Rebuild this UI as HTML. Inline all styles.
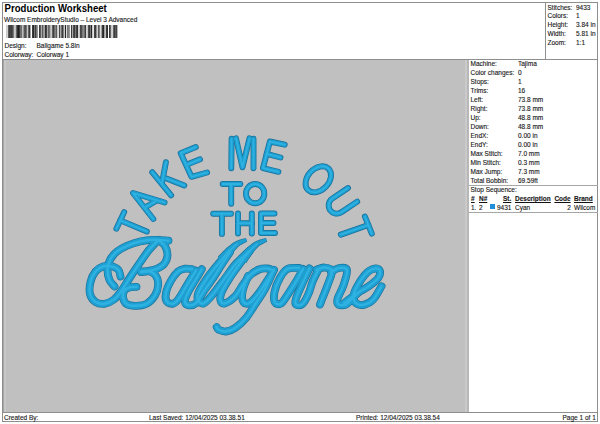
<!DOCTYPE html>
<html><head><meta charset="utf-8">
<style>
html,body{margin:0;padding:0;background:#fff;width:600px;height:424px;overflow:hidden;}
body{position:relative;font-family:"Liberation Sans",sans-serif;color:#1a1a1a;}
.a{position:absolute;white-space:pre;line-height:1;}
.t{font-size:6.5px;-webkit-text-stroke:0.12px #111;}
.ln{position:absolute;background:#8e8e8e;}
</style></head><body>
<!-- outer border -->
<div class="ln" style="left:2px;top:2px;width:596px;height:1px"></div>
<div class="ln" style="left:2px;top:421px;width:596px;height:1px"></div>
<div class="ln" style="left:2px;top:2px;width:1px;height:420px"></div>
<div class="ln" style="left:597px;top:2px;width:1px;height:420px"></div>
<!-- header line -->
<div class="ln" style="left:2px;top:59px;width:596px;height:1px"></div>
<!-- header right box -->
<div class="ln" style="left:545px;top:2px;width:1px;height:58px"></div>
<!-- gray area -->
<div style="position:absolute;left:3px;top:60px;width:464px;height:352px;background:#c0c0c0"></div>
<div style="position:absolute;left:3px;top:60px;width:1px;height:352px;background:#a4a4a4"></div>
<div style="position:absolute;left:4px;top:60px;width:2px;height:352px;background:#c8c8c8"></div>
<div style="position:absolute;left:465px;top:60px;width:2px;height:352px;background:#cacaca"></div>
<div class="ln" style="left:467px;top:60px;width:2px;height:352px;background:#b8b8b8"></div>
<svg style="position:absolute;left:0;top:0" width="600" height="424" viewBox="0 0 600 424"><g fill="none" stroke="#176f99" stroke-width="5.9" stroke-linecap="round" stroke-linejoin="round"><path d="M116.4,228.7 L124.2,212.1"/><path d="M120.3,220.4 L146.8,231.5"/><path d="M153.3,219.0 L133.0,193.0 L164.6,202.5"/><path d="M146.2,206.7 L155.2,201.5"/><path d="M152.2,172.2 L171.1,195.3"/><path d="M165.9,162.2 L162.0,183.0"/><path d="M166.5,178.5 L184.3,185.4"/><path d="M195.8,147.1 L180.7,153.2 L191.5,176.8 L207.1,172.5"/><path d="M188.2,164.1 L200.0,159.3"/><path d="M231.6,138.8 L231.3,168.3"/><path d="M236.0,138.3 L242.5,167.3 L249.5,138.3"/><path d="M253.5,138.8 L253.5,168.3"/><path d="M284.7,144.7 L269.9,141.5 L263.0,168.1 L278.4,171.8"/><path d="M266.7,153.8 L280.5,157.5"/><path d="M348.0,188.0 L332.2,198.6 L330.6,200.0 L329.5,201.8 L328.8,203.9 L328.7,206.0 L329.1,208.1 L330.0,210.0 L331.5,211.6 L333.2,212.8 L335.3,213.5 L337.4,213.6 L339.5,213.2 L341.4,212.2 L357.2,201.6"/><path d="M364.9,216.5 L371.8,233.6"/><path d="M368.3,225.0 L340.8,234.6"/><path d="M222.7,184.0 L240.3,184.0"/><path d="M231.2,184.0 L231.2,203.7"/><path d="M213.2,213.7 L231.0,213.7"/><path d="M221.9,213.7 L221.9,233.9"/><path d="M238.0,213.5 L238.0,233.5"/><path d="M251.8,213.5 L251.8,233.5"/><path d="M238.0,223.3 L251.8,223.3"/><path d="M274.5,213.5 L261.0,213.5 L261.0,233.0 L275.0,233.0"/><path d="M261.0,223.0 L273.5,223.0"/><ellipse cx="318.3" cy="179.3" rx="10.6" ry="14.8" transform="rotate(43 318.3 179.3)"/><ellipse cx="255.15" cy="193.65" rx="9.15" ry="9.65" transform="rotate(0 255.15 193.65)"/></g><g fill="none" stroke="#176f99" stroke-width="7.8" stroke-linecap="round" stroke-linejoin="round"><path d="M120.5,276.5 C120.2,275.4 120.0,271.7 118.5,270.0 C117.0,268.3 114.1,266.9 111.5,266.3 C108.9,265.7 105.7,265.6 103.0,266.5 C100.3,267.4 97.6,268.9 95.5,271.5 C93.4,274.1 91.4,278.2 90.5,282.0 C89.6,285.8 89.2,290.7 90.0,294.0 C90.8,297.3 93.1,300.4 95.5,302.0 C97.9,303.6 101.4,304.2 104.5,303.8 C107.6,303.4 111.2,301.6 114.0,299.5 C116.8,297.4 118.5,294.9 121.0,291.5 C123.5,288.1 126.0,283.6 129.0,279.0 C132.0,274.4 135.7,268.8 139.0,264.0 C142.3,259.2 145.8,254.0 149.0,250.0 C152.2,246.0 156.8,241.7 158.3,240.0"/><path d="M114.5,286.5 C113.7,285.4 110.7,282.9 109.5,280.0 C108.3,277.1 107.3,272.5 107.5,269.0 C107.7,265.5 108.9,261.9 110.5,259.0 C112.1,256.1 114.2,253.7 117.0,251.5 C119.8,249.3 123.2,247.5 127.0,245.8 C130.8,244.1 135.5,242.5 140.0,241.5 C144.5,240.5 149.2,240.0 154.0,239.8 C158.8,239.7 166.1,240.5 168.5,240.6"/><path d="M159.0,240.5 C160.0,241.4 163.6,243.6 165.0,246.0 C166.4,248.4 167.6,252.1 167.5,255.0 C167.4,257.9 166.2,261.2 164.5,263.5 C162.8,265.8 160.2,267.2 157.5,268.5 C154.8,269.8 150.7,270.5 148.0,271.0 C145.3,271.5 142.6,271.4 141.5,271.5"/><path d="M141.0,272.0 C142.5,271.9 147.5,270.8 150.0,271.5 C152.5,272.2 154.6,273.8 156.0,276.0 C157.4,278.2 158.4,281.8 158.2,285.0 C158.0,288.2 156.9,292.3 155.0,295.4 C153.1,298.5 150.1,301.9 147.0,303.6 C143.9,305.3 139.6,305.7 136.2,305.8 C132.8,305.9 128.7,305.5 126.5,304.0 C124.3,302.5 123.3,299.3 123.0,297.0 C122.7,294.7 123.5,291.6 124.8,290.0 C126.0,288.4 128.6,287.7 130.5,287.2 C132.4,286.7 135.5,286.9 136.5,286.8"/><path d="M192.0,269.2 C190.8,269.1 187.4,268.3 185.1,268.7 C182.8,269.1 180.3,269.6 178.0,271.5 C175.7,273.5 173.0,277.1 171.0,280.6 C169.0,284.2 166.7,289.2 166.0,292.7 C165.3,296.2 165.6,299.8 166.8,301.6 C168.0,303.4 171.4,304.0 173.3,303.6 C175.2,303.1 176.2,302.1 178.5,299.0 C180.8,295.9 184.1,289.7 187.0,285.0 C189.9,280.2 194.5,273.0 196.0,270.6"/><path d="M201.8,269.2 C200.7,271.1 197.1,277.1 195.0,280.6 C192.9,284.2 190.7,287.2 189.0,290.5 C187.3,293.8 185.2,298.0 185.0,300.4 C184.8,302.8 185.7,304.5 187.5,305.0 C189.3,305.5 192.9,305.7 195.7,303.4 C198.4,301.1 201.0,295.3 204.0,291.0 C207.0,286.7 210.5,282.0 213.5,277.5 C216.5,273.0 219.2,268.4 222.0,264.2 C224.8,259.9 228.7,254.0 230.0,252.0"/><path d="M229.0,251.0 C227.2,253.2 221.7,259.6 218.0,264.2 C214.3,268.8 210.2,273.6 207.0,278.3 C203.8,283.0 200.0,288.9 198.5,292.5 C197.0,296.1 197.2,298.2 198.0,300.0 C198.8,301.8 201.2,304.2 203.5,303.5 C205.8,302.8 207.9,300.2 211.5,296.0 C215.1,291.8 221.0,283.6 225.0,278.3 C229.0,273.0 231.6,268.6 235.5,264.2 C239.4,259.8 246.3,254.0 248.5,252.0"/><path d="M249.5,251.0 C247.8,253.2 242.8,259.6 239.5,264.2 C236.2,268.8 232.5,273.6 229.5,278.3 C226.5,283.0 223.0,288.8 221.5,292.5 C220.0,296.2 220.0,298.7 220.5,300.5 C221.0,302.3 222.1,304.2 224.5,303.5 C226.9,302.8 231.9,299.7 235.0,296.5 C238.1,293.3 240.4,288.1 243.0,284.5 C245.6,280.9 247.8,277.5 250.5,275.0 C253.2,272.5 256.2,270.6 259.0,269.5 C261.8,268.4 265.1,268.3 267.5,268.5 C269.9,268.7 272.5,270.2 273.5,270.5"/><path d="M248.0,276.0 C247.1,278.6 243.2,287.5 242.5,291.9 C241.8,296.3 242.2,300.4 243.5,302.2 C244.8,304.0 247.4,304.3 250.0,302.7 C252.6,301.1 255.0,298.3 259.0,292.9 C263.0,287.4 271.5,273.7 274.0,269.8"/><path d="M273.5,270.5 C272.0,273.8 267.4,284.6 264.5,290.0 C261.6,295.4 259.0,298.4 256.0,303.0 C253.0,307.6 249.9,313.3 246.5,317.4 C243.1,321.5 238.9,325.4 235.5,327.8 C232.1,330.2 228.8,331.2 226.0,331.5 C223.2,331.8 220.1,330.4 218.5,329.7 C216.9,328.9 217.0,327.4 216.7,327.0"/><path d="M299.0,268.0 C297.1,268.1 290.7,267.3 287.5,268.9 C284.3,270.6 282.2,274.0 280.0,277.8 C277.8,281.7 275.3,287.8 274.5,291.9 C273.7,296.0 273.9,300.6 275.0,302.5 C276.1,304.5 279.0,304.7 281.0,303.6 C283.0,302.4 284.5,299.3 287.0,295.7 C289.5,292.0 293.3,286.0 296.0,281.6 C298.7,277.1 301.8,271.0 303.0,268.9"/><path d="M309.5,268.4 C308.2,271.1 304.2,279.4 302.0,284.4 C299.8,289.4 297.0,295.1 296.0,298.5 C295.0,301.9 294.9,303.7 296.0,304.6 C297.1,305.5 300.4,305.9 302.5,304.1 C304.6,302.3 306.8,297.7 308.5,293.8 C310.2,289.9 311.3,284.7 313.0,280.6 C314.7,276.6 317.6,271.3 318.5,269.4"/><path d="M316.5,269.8 C317.8,269.5 321.4,267.3 324.0,267.5 C326.6,267.7 331.4,267.8 332.0,270.8 C332.6,273.8 329.2,280.6 327.5,285.3 C325.8,290.1 323.2,296.2 322.0,299.4 C320.8,302.6 320.3,303.7 320.0,304.6"/><path d="M331.0,272.2 C332.3,271.5 336.3,268.4 339.0,268.0 C341.7,267.6 346.2,267.0 347.0,269.8 C347.8,272.7 345.1,280.5 343.5,285.3 C341.9,290.2 338.3,295.7 337.5,299.0 C336.7,302.2 337.1,303.7 338.5,304.6 C339.9,305.5 343.8,305.5 346.0,304.6 C348.2,303.7 350.0,300.9 352.0,299.0 C354.0,297.0 357.0,293.7 358.0,292.7"/><path d="M344.0,303.2 C346.3,301.4 354.0,295.4 358.0,292.7 C362.0,289.9 364.7,289.1 368.0,286.8 C371.3,284.4 376.0,280.9 378.0,278.3 C380.0,275.7 380.3,272.9 380.0,271.3 C379.7,269.6 378.1,268.3 376.0,268.4 C373.9,268.6 370.4,269.6 367.5,272.2 C364.6,274.8 360.8,280.1 358.5,283.9 C356.2,287.8 353.9,292.1 353.5,295.3 C353.1,298.5 354.2,301.7 356.0,303.3 C357.8,304.8 361.6,305.3 364.5,304.6 C367.4,303.9 370.7,302.3 373.5,299.2 C376.3,296.2 380.2,288.4 381.5,286.3"/></g><g fill="#176f99" stroke="none"><path d="M226.17,263.35 L226.61,262.58 L227.21,261.58 L227.93,260.44 L228.73,259.20 L229.58,257.92 L230.45,256.65 L231.29,255.44 L232.09,254.34 L232.90,253.26 L233.73,252.17 L234.56,251.10 L235.38,250.07 L236.20,249.09 L237.03,248.17 L237.86,247.31 L238.67,246.55 L239.59,245.83 L240.69,245.11 L241.91,244.40 L243.17,243.73 L244.40,243.10 L245.53,242.53 L246.50,242.01 L247.21,241.56 L245.79,238.04 L245.02,238.20 L243.99,238.43 L242.74,238.74 L241.33,239.13 L239.83,239.59 L238.30,240.13 L236.77,240.75 L235.33,241.45 L233.99,242.23 L232.72,243.07 L231.49,243.96 L230.31,244.89 L229.16,245.84 L228.06,246.78 L226.98,247.72 L225.91,248.66 L224.77,249.70 L223.58,250.86 L222.41,252.06 L221.27,253.23 L220.21,254.34 L219.26,255.31 L218.46,256.10 L217.83,256.65Z"/><path d="M246.17,263.35 L246.61,262.58 L247.21,261.58 L247.93,260.44 L248.73,259.20 L249.58,257.92 L250.45,256.65 L251.29,255.44 L252.09,254.34 L252.90,253.26 L253.73,252.17 L254.56,251.10 L255.38,250.07 L256.20,249.09 L257.03,248.17 L257.86,247.31 L258.67,246.55 L259.59,245.83 L260.69,245.11 L261.91,244.40 L263.17,243.73 L264.40,243.10 L265.53,242.53 L266.50,242.01 L267.21,241.56 L265.79,238.04 L265.02,238.20 L263.99,238.43 L262.74,238.74 L261.33,239.13 L259.83,239.59 L258.30,240.13 L256.77,240.75 L255.33,241.45 L253.99,242.23 L252.72,243.07 L251.49,243.96 L250.31,244.89 L249.16,245.84 L248.06,246.78 L246.98,247.72 L245.91,248.66 L244.77,249.70 L243.58,250.86 L242.41,252.06 L241.27,253.23 L240.21,254.34 L239.26,255.31 L238.46,256.10 L237.83,256.65Z"/></g><g fill="none" stroke="#1f9ed0" stroke-width="4.5" stroke-linecap="round" stroke-linejoin="round"><path d="M116.4,228.7 L124.2,212.1"/><path d="M120.3,220.4 L146.8,231.5"/><path d="M153.3,219.0 L133.0,193.0 L164.6,202.5"/><path d="M146.2,206.7 L155.2,201.5"/><path d="M152.2,172.2 L171.1,195.3"/><path d="M165.9,162.2 L162.0,183.0"/><path d="M166.5,178.5 L184.3,185.4"/><path d="M195.8,147.1 L180.7,153.2 L191.5,176.8 L207.1,172.5"/><path d="M188.2,164.1 L200.0,159.3"/><path d="M231.6,138.8 L231.3,168.3"/><path d="M236.0,138.3 L242.5,167.3 L249.5,138.3"/><path d="M253.5,138.8 L253.5,168.3"/><path d="M284.7,144.7 L269.9,141.5 L263.0,168.1 L278.4,171.8"/><path d="M266.7,153.8 L280.5,157.5"/><path d="M348.0,188.0 L332.2,198.6 L330.6,200.0 L329.5,201.8 L328.8,203.9 L328.7,206.0 L329.1,208.1 L330.0,210.0 L331.5,211.6 L333.2,212.8 L335.3,213.5 L337.4,213.6 L339.5,213.2 L341.4,212.2 L357.2,201.6"/><path d="M364.9,216.5 L371.8,233.6"/><path d="M368.3,225.0 L340.8,234.6"/><path d="M222.7,184.0 L240.3,184.0"/><path d="M231.2,184.0 L231.2,203.7"/><path d="M213.2,213.7 L231.0,213.7"/><path d="M221.9,213.7 L221.9,233.9"/><path d="M238.0,213.5 L238.0,233.5"/><path d="M251.8,213.5 L251.8,233.5"/><path d="M238.0,223.3 L251.8,223.3"/><path d="M274.5,213.5 L261.0,213.5 L261.0,233.0 L275.0,233.0"/><path d="M261.0,223.0 L273.5,223.0"/><ellipse cx="318.3" cy="179.3" rx="10.6" ry="14.8" transform="rotate(43 318.3 179.3)"/><ellipse cx="255.15" cy="193.65" rx="9.15" ry="9.65" transform="rotate(0 255.15 193.65)"/></g><g fill="none" stroke="#1f9ed0" stroke-width="6.6" stroke-linecap="round" stroke-linejoin="round"><path d="M120.5,276.5 C120.2,275.4 120.0,271.7 118.5,270.0 C117.0,268.3 114.1,266.9 111.5,266.3 C108.9,265.7 105.7,265.6 103.0,266.5 C100.3,267.4 97.6,268.9 95.5,271.5 C93.4,274.1 91.4,278.2 90.5,282.0 C89.6,285.8 89.2,290.7 90.0,294.0 C90.8,297.3 93.1,300.4 95.5,302.0 C97.9,303.6 101.4,304.2 104.5,303.8 C107.6,303.4 111.2,301.6 114.0,299.5 C116.8,297.4 118.5,294.9 121.0,291.5 C123.5,288.1 126.0,283.6 129.0,279.0 C132.0,274.4 135.7,268.8 139.0,264.0 C142.3,259.2 145.8,254.0 149.0,250.0 C152.2,246.0 156.8,241.7 158.3,240.0"/><path d="M114.5,286.5 C113.7,285.4 110.7,282.9 109.5,280.0 C108.3,277.1 107.3,272.5 107.5,269.0 C107.7,265.5 108.9,261.9 110.5,259.0 C112.1,256.1 114.2,253.7 117.0,251.5 C119.8,249.3 123.2,247.5 127.0,245.8 C130.8,244.1 135.5,242.5 140.0,241.5 C144.5,240.5 149.2,240.0 154.0,239.8 C158.8,239.7 166.1,240.5 168.5,240.6"/><path d="M159.0,240.5 C160.0,241.4 163.6,243.6 165.0,246.0 C166.4,248.4 167.6,252.1 167.5,255.0 C167.4,257.9 166.2,261.2 164.5,263.5 C162.8,265.8 160.2,267.2 157.5,268.5 C154.8,269.8 150.7,270.5 148.0,271.0 C145.3,271.5 142.6,271.4 141.5,271.5"/><path d="M141.0,272.0 C142.5,271.9 147.5,270.8 150.0,271.5 C152.5,272.2 154.6,273.8 156.0,276.0 C157.4,278.2 158.4,281.8 158.2,285.0 C158.0,288.2 156.9,292.3 155.0,295.4 C153.1,298.5 150.1,301.9 147.0,303.6 C143.9,305.3 139.6,305.7 136.2,305.8 C132.8,305.9 128.7,305.5 126.5,304.0 C124.3,302.5 123.3,299.3 123.0,297.0 C122.7,294.7 123.5,291.6 124.8,290.0 C126.0,288.4 128.6,287.7 130.5,287.2 C132.4,286.7 135.5,286.9 136.5,286.8"/><path d="M192.0,269.2 C190.8,269.1 187.4,268.3 185.1,268.7 C182.8,269.1 180.3,269.6 178.0,271.5 C175.7,273.5 173.0,277.1 171.0,280.6 C169.0,284.2 166.7,289.2 166.0,292.7 C165.3,296.2 165.6,299.8 166.8,301.6 C168.0,303.4 171.4,304.0 173.3,303.6 C175.2,303.1 176.2,302.1 178.5,299.0 C180.8,295.9 184.1,289.7 187.0,285.0 C189.9,280.2 194.5,273.0 196.0,270.6"/><path d="M201.8,269.2 C200.7,271.1 197.1,277.1 195.0,280.6 C192.9,284.2 190.7,287.2 189.0,290.5 C187.3,293.8 185.2,298.0 185.0,300.4 C184.8,302.8 185.7,304.5 187.5,305.0 C189.3,305.5 192.9,305.7 195.7,303.4 C198.4,301.1 201.0,295.3 204.0,291.0 C207.0,286.7 210.5,282.0 213.5,277.5 C216.5,273.0 219.2,268.4 222.0,264.2 C224.8,259.9 228.7,254.0 230.0,252.0"/><path d="M229.0,251.0 C227.2,253.2 221.7,259.6 218.0,264.2 C214.3,268.8 210.2,273.6 207.0,278.3 C203.8,283.0 200.0,288.9 198.5,292.5 C197.0,296.1 197.2,298.2 198.0,300.0 C198.8,301.8 201.2,304.2 203.5,303.5 C205.8,302.8 207.9,300.2 211.5,296.0 C215.1,291.8 221.0,283.6 225.0,278.3 C229.0,273.0 231.6,268.6 235.5,264.2 C239.4,259.8 246.3,254.0 248.5,252.0"/><path d="M249.5,251.0 C247.8,253.2 242.8,259.6 239.5,264.2 C236.2,268.8 232.5,273.6 229.5,278.3 C226.5,283.0 223.0,288.8 221.5,292.5 C220.0,296.2 220.0,298.7 220.5,300.5 C221.0,302.3 222.1,304.2 224.5,303.5 C226.9,302.8 231.9,299.7 235.0,296.5 C238.1,293.3 240.4,288.1 243.0,284.5 C245.6,280.9 247.8,277.5 250.5,275.0 C253.2,272.5 256.2,270.6 259.0,269.5 C261.8,268.4 265.1,268.3 267.5,268.5 C269.9,268.7 272.5,270.2 273.5,270.5"/><path d="M248.0,276.0 C247.1,278.6 243.2,287.5 242.5,291.9 C241.8,296.3 242.2,300.4 243.5,302.2 C244.8,304.0 247.4,304.3 250.0,302.7 C252.6,301.1 255.0,298.3 259.0,292.9 C263.0,287.4 271.5,273.7 274.0,269.8"/><path d="M273.5,270.5 C272.0,273.8 267.4,284.6 264.5,290.0 C261.6,295.4 259.0,298.4 256.0,303.0 C253.0,307.6 249.9,313.3 246.5,317.4 C243.1,321.5 238.9,325.4 235.5,327.8 C232.1,330.2 228.8,331.2 226.0,331.5 C223.2,331.8 220.1,330.4 218.5,329.7 C216.9,328.9 217.0,327.4 216.7,327.0"/><path d="M299.0,268.0 C297.1,268.1 290.7,267.3 287.5,268.9 C284.3,270.6 282.2,274.0 280.0,277.8 C277.8,281.7 275.3,287.8 274.5,291.9 C273.7,296.0 273.9,300.6 275.0,302.5 C276.1,304.5 279.0,304.7 281.0,303.6 C283.0,302.4 284.5,299.3 287.0,295.7 C289.5,292.0 293.3,286.0 296.0,281.6 C298.7,277.1 301.8,271.0 303.0,268.9"/><path d="M309.5,268.4 C308.2,271.1 304.2,279.4 302.0,284.4 C299.8,289.4 297.0,295.1 296.0,298.5 C295.0,301.9 294.9,303.7 296.0,304.6 C297.1,305.5 300.4,305.9 302.5,304.1 C304.6,302.3 306.8,297.7 308.5,293.8 C310.2,289.9 311.3,284.7 313.0,280.6 C314.7,276.6 317.6,271.3 318.5,269.4"/><path d="M316.5,269.8 C317.8,269.5 321.4,267.3 324.0,267.5 C326.6,267.7 331.4,267.8 332.0,270.8 C332.6,273.8 329.2,280.6 327.5,285.3 C325.8,290.1 323.2,296.2 322.0,299.4 C320.8,302.6 320.3,303.7 320.0,304.6"/><path d="M331.0,272.2 C332.3,271.5 336.3,268.4 339.0,268.0 C341.7,267.6 346.2,267.0 347.0,269.8 C347.8,272.7 345.1,280.5 343.5,285.3 C341.9,290.2 338.3,295.7 337.5,299.0 C336.7,302.2 337.1,303.7 338.5,304.6 C339.9,305.5 343.8,305.5 346.0,304.6 C348.2,303.7 350.0,300.9 352.0,299.0 C354.0,297.0 357.0,293.7 358.0,292.7"/><path d="M344.0,303.2 C346.3,301.4 354.0,295.4 358.0,292.7 C362.0,289.9 364.7,289.1 368.0,286.8 C371.3,284.4 376.0,280.9 378.0,278.3 C380.0,275.7 380.3,272.9 380.0,271.3 C379.7,269.6 378.1,268.3 376.0,268.4 C373.9,268.6 370.4,269.6 367.5,272.2 C364.6,274.8 360.8,280.1 358.5,283.9 C356.2,287.8 353.9,292.1 353.5,295.3 C353.1,298.5 354.2,301.7 356.0,303.3 C357.8,304.8 361.6,305.3 364.5,304.6 C367.4,303.9 370.7,302.3 373.5,299.2 C376.3,296.2 380.2,288.4 381.5,286.3"/></g><g fill="#1f9ed0" stroke="none"><path d="M225.70,262.98 L226.14,262.21 L226.74,261.21 L227.45,260.07 L228.26,258.83 L229.11,257.54 L229.99,256.26 L230.84,255.05 L231.65,253.94 L232.46,252.85 L233.30,251.76 L234.13,250.68 L234.96,249.64 L235.80,248.65 L236.64,247.71 L237.49,246.84 L238.35,246.05 L239.30,245.31 L240.43,244.57 L241.67,243.85 L242.94,243.17 L244.18,242.54 L245.32,241.96 L246.28,241.45 L246.99,241.00 L246.01,238.60 L245.23,238.76 L244.20,238.99 L242.95,239.30 L241.56,239.69 L240.07,240.14 L238.56,240.67 L237.06,241.27 L235.65,241.95 L234.35,242.71 L233.10,243.53 L231.90,244.40 L230.73,245.32 L229.59,246.26 L228.49,247.20 L227.42,248.13 L226.35,249.06 L225.22,250.10 L224.04,251.25 L222.87,252.44 L221.74,253.61 L220.68,254.71 L219.73,255.69 L218.93,256.47 L218.30,257.02Z"/><path d="M245.70,262.98 L246.14,262.21 L246.74,261.21 L247.45,260.07 L248.26,258.83 L249.11,257.54 L249.99,256.26 L250.84,255.05 L251.65,253.94 L252.46,252.85 L253.30,251.76 L254.13,250.68 L254.96,249.64 L255.80,248.65 L256.64,247.71 L257.49,246.84 L258.35,246.05 L259.30,245.31 L260.43,244.57 L261.67,243.85 L262.94,243.17 L264.18,242.54 L265.32,241.96 L266.28,241.45 L266.99,241.00 L266.01,238.60 L265.23,238.76 L264.20,238.99 L262.95,239.30 L261.56,239.69 L260.07,240.14 L258.56,240.67 L257.06,241.27 L255.65,241.95 L254.35,242.71 L253.10,243.53 L251.90,244.40 L250.73,245.32 L249.59,246.26 L248.49,247.20 L247.42,248.13 L246.35,249.06 L245.22,250.10 L244.04,251.25 L242.87,252.44 L241.74,253.61 L240.68,254.71 L239.73,255.69 L238.93,256.47 L238.30,257.02Z"/></g><g fill="none" stroke="#2eb2e2" stroke-width="1.8" stroke-linecap="round" stroke-linejoin="round"><path d="M116.4,228.7 L124.2,212.1"/><path d="M120.3,220.4 L146.8,231.5"/><path d="M153.3,219.0 L133.0,193.0 L164.6,202.5"/><path d="M146.2,206.7 L155.2,201.5"/><path d="M152.2,172.2 L171.1,195.3"/><path d="M165.9,162.2 L162.0,183.0"/><path d="M166.5,178.5 L184.3,185.4"/><path d="M195.8,147.1 L180.7,153.2 L191.5,176.8 L207.1,172.5"/><path d="M188.2,164.1 L200.0,159.3"/><path d="M231.6,138.8 L231.3,168.3"/><path d="M236.0,138.3 L242.5,167.3 L249.5,138.3"/><path d="M253.5,138.8 L253.5,168.3"/><path d="M284.7,144.7 L269.9,141.5 L263.0,168.1 L278.4,171.8"/><path d="M266.7,153.8 L280.5,157.5"/><path d="M348.0,188.0 L332.2,198.6 L330.6,200.0 L329.5,201.8 L328.8,203.9 L328.7,206.0 L329.1,208.1 L330.0,210.0 L331.5,211.6 L333.2,212.8 L335.3,213.5 L337.4,213.6 L339.5,213.2 L341.4,212.2 L357.2,201.6"/><path d="M364.9,216.5 L371.8,233.6"/><path d="M368.3,225.0 L340.8,234.6"/><path d="M222.7,184.0 L240.3,184.0"/><path d="M231.2,184.0 L231.2,203.7"/><path d="M213.2,213.7 L231.0,213.7"/><path d="M221.9,213.7 L221.9,233.9"/><path d="M238.0,213.5 L238.0,233.5"/><path d="M251.8,213.5 L251.8,233.5"/><path d="M238.0,223.3 L251.8,223.3"/><path d="M274.5,213.5 L261.0,213.5 L261.0,233.0 L275.0,233.0"/><path d="M261.0,223.0 L273.5,223.0"/><ellipse cx="318.3" cy="179.3" rx="10.6" ry="14.8" transform="rotate(43 318.3 179.3)"/><ellipse cx="255.15" cy="193.65" rx="9.15" ry="9.65" transform="rotate(0 255.15 193.65)"/></g><g fill="none" stroke="#2eb2e2" stroke-width="2.4" stroke-linecap="round" stroke-linejoin="round"><path d="M120.5,276.5 C120.2,275.4 120.0,271.7 118.5,270.0 C117.0,268.3 114.1,266.9 111.5,266.3 C108.9,265.7 105.7,265.6 103.0,266.5 C100.3,267.4 97.6,268.9 95.5,271.5 C93.4,274.1 91.4,278.2 90.5,282.0 C89.6,285.8 89.2,290.7 90.0,294.0 C90.8,297.3 93.1,300.4 95.5,302.0 C97.9,303.6 101.4,304.2 104.5,303.8 C107.6,303.4 111.2,301.6 114.0,299.5 C116.8,297.4 118.5,294.9 121.0,291.5 C123.5,288.1 126.0,283.6 129.0,279.0 C132.0,274.4 135.7,268.8 139.0,264.0 C142.3,259.2 145.8,254.0 149.0,250.0 C152.2,246.0 156.8,241.7 158.3,240.0"/><path d="M114.5,286.5 C113.7,285.4 110.7,282.9 109.5,280.0 C108.3,277.1 107.3,272.5 107.5,269.0 C107.7,265.5 108.9,261.9 110.5,259.0 C112.1,256.1 114.2,253.7 117.0,251.5 C119.8,249.3 123.2,247.5 127.0,245.8 C130.8,244.1 135.5,242.5 140.0,241.5 C144.5,240.5 149.2,240.0 154.0,239.8 C158.8,239.7 166.1,240.5 168.5,240.6"/><path d="M159.0,240.5 C160.0,241.4 163.6,243.6 165.0,246.0 C166.4,248.4 167.6,252.1 167.5,255.0 C167.4,257.9 166.2,261.2 164.5,263.5 C162.8,265.8 160.2,267.2 157.5,268.5 C154.8,269.8 150.7,270.5 148.0,271.0 C145.3,271.5 142.6,271.4 141.5,271.5"/><path d="M141.0,272.0 C142.5,271.9 147.5,270.8 150.0,271.5 C152.5,272.2 154.6,273.8 156.0,276.0 C157.4,278.2 158.4,281.8 158.2,285.0 C158.0,288.2 156.9,292.3 155.0,295.4 C153.1,298.5 150.1,301.9 147.0,303.6 C143.9,305.3 139.6,305.7 136.2,305.8 C132.8,305.9 128.7,305.5 126.5,304.0 C124.3,302.5 123.3,299.3 123.0,297.0 C122.7,294.7 123.5,291.6 124.8,290.0 C126.0,288.4 128.6,287.7 130.5,287.2 C132.4,286.7 135.5,286.9 136.5,286.8"/><path d="M192.0,269.2 C190.8,269.1 187.4,268.3 185.1,268.7 C182.8,269.1 180.3,269.6 178.0,271.5 C175.7,273.5 173.0,277.1 171.0,280.6 C169.0,284.2 166.7,289.2 166.0,292.7 C165.3,296.2 165.6,299.8 166.8,301.6 C168.0,303.4 171.4,304.0 173.3,303.6 C175.2,303.1 176.2,302.1 178.5,299.0 C180.8,295.9 184.1,289.7 187.0,285.0 C189.9,280.2 194.5,273.0 196.0,270.6"/><path d="M201.8,269.2 C200.7,271.1 197.1,277.1 195.0,280.6 C192.9,284.2 190.7,287.2 189.0,290.5 C187.3,293.8 185.2,298.0 185.0,300.4 C184.8,302.8 185.7,304.5 187.5,305.0 C189.3,305.5 192.9,305.7 195.7,303.4 C198.4,301.1 201.0,295.3 204.0,291.0 C207.0,286.7 210.5,282.0 213.5,277.5 C216.5,273.0 219.2,268.4 222.0,264.2 C224.8,259.9 228.7,254.0 230.0,252.0"/><path d="M229.0,251.0 C227.2,253.2 221.7,259.6 218.0,264.2 C214.3,268.8 210.2,273.6 207.0,278.3 C203.8,283.0 200.0,288.9 198.5,292.5 C197.0,296.1 197.2,298.2 198.0,300.0 C198.8,301.8 201.2,304.2 203.5,303.5 C205.8,302.8 207.9,300.2 211.5,296.0 C215.1,291.8 221.0,283.6 225.0,278.3 C229.0,273.0 231.6,268.6 235.5,264.2 C239.4,259.8 246.3,254.0 248.5,252.0"/><path d="M249.5,251.0 C247.8,253.2 242.8,259.6 239.5,264.2 C236.2,268.8 232.5,273.6 229.5,278.3 C226.5,283.0 223.0,288.8 221.5,292.5 C220.0,296.2 220.0,298.7 220.5,300.5 C221.0,302.3 222.1,304.2 224.5,303.5 C226.9,302.8 231.9,299.7 235.0,296.5 C238.1,293.3 240.4,288.1 243.0,284.5 C245.6,280.9 247.8,277.5 250.5,275.0 C253.2,272.5 256.2,270.6 259.0,269.5 C261.8,268.4 265.1,268.3 267.5,268.5 C269.9,268.7 272.5,270.2 273.5,270.5"/><path d="M248.0,276.0 C247.1,278.6 243.2,287.5 242.5,291.9 C241.8,296.3 242.2,300.4 243.5,302.2 C244.8,304.0 247.4,304.3 250.0,302.7 C252.6,301.1 255.0,298.3 259.0,292.9 C263.0,287.4 271.5,273.7 274.0,269.8"/><path d="M273.5,270.5 C272.0,273.8 267.4,284.6 264.5,290.0 C261.6,295.4 259.0,298.4 256.0,303.0 C253.0,307.6 249.9,313.3 246.5,317.4 C243.1,321.5 238.9,325.4 235.5,327.8 C232.1,330.2 228.8,331.2 226.0,331.5 C223.2,331.8 220.1,330.4 218.5,329.7 C216.9,328.9 217.0,327.4 216.7,327.0"/><path d="M299.0,268.0 C297.1,268.1 290.7,267.3 287.5,268.9 C284.3,270.6 282.2,274.0 280.0,277.8 C277.8,281.7 275.3,287.8 274.5,291.9 C273.7,296.0 273.9,300.6 275.0,302.5 C276.1,304.5 279.0,304.7 281.0,303.6 C283.0,302.4 284.5,299.3 287.0,295.7 C289.5,292.0 293.3,286.0 296.0,281.6 C298.7,277.1 301.8,271.0 303.0,268.9"/><path d="M309.5,268.4 C308.2,271.1 304.2,279.4 302.0,284.4 C299.8,289.4 297.0,295.1 296.0,298.5 C295.0,301.9 294.9,303.7 296.0,304.6 C297.1,305.5 300.4,305.9 302.5,304.1 C304.6,302.3 306.8,297.7 308.5,293.8 C310.2,289.9 311.3,284.7 313.0,280.6 C314.7,276.6 317.6,271.3 318.5,269.4"/><path d="M316.5,269.8 C317.8,269.5 321.4,267.3 324.0,267.5 C326.6,267.7 331.4,267.8 332.0,270.8 C332.6,273.8 329.2,280.6 327.5,285.3 C325.8,290.1 323.2,296.2 322.0,299.4 C320.8,302.6 320.3,303.7 320.0,304.6"/><path d="M331.0,272.2 C332.3,271.5 336.3,268.4 339.0,268.0 C341.7,267.6 346.2,267.0 347.0,269.8 C347.8,272.7 345.1,280.5 343.5,285.3 C341.9,290.2 338.3,295.7 337.5,299.0 C336.7,302.2 337.1,303.7 338.5,304.6 C339.9,305.5 343.8,305.5 346.0,304.6 C348.2,303.7 350.0,300.9 352.0,299.0 C354.0,297.0 357.0,293.7 358.0,292.7"/><path d="M344.0,303.2 C346.3,301.4 354.0,295.4 358.0,292.7 C362.0,289.9 364.7,289.1 368.0,286.8 C371.3,284.4 376.0,280.9 378.0,278.3 C380.0,275.7 380.3,272.9 380.0,271.3 C379.7,269.6 378.1,268.3 376.0,268.4 C373.9,268.6 370.4,269.6 367.5,272.2 C364.6,274.8 360.8,280.1 358.5,283.9 C356.2,287.8 353.9,292.1 353.5,295.3 C353.1,298.5 354.2,301.7 356.0,303.3 C357.8,304.8 361.6,305.3 364.5,304.6 C367.4,303.9 370.7,302.3 373.5,299.2 C376.3,296.2 380.2,288.4 381.5,286.3"/></g><g fill="none" stroke="#2eb2e2" stroke-width="1.68" stroke-linecap="round"><path d="M222.0,260.0 C223.2,258.6 226.5,254.2 229.0,251.5 C231.5,248.8 235.7,245.2 237.0,244.0"/><path d="M242.0,260.0 C243.2,258.6 246.5,254.2 249.0,251.5 C251.5,248.8 255.7,245.2 257.0,244.0"/></g></svg>
<!-- footer line -->
<div class="ln" style="left:2px;top:412px;width:596px;height:1px"></div>

<svg style="position:absolute;left:0;top:0" width="600" height="60"><g><rect x="6" y="25" width="1" height="13" fill="rgb(200,200,200)"/><rect x="7" y="25" width="1" height="13" fill="rgb(210,210,210)"/><rect x="8" y="25" width="1" height="13" fill="rgb(90,90,90)"/><rect x="9" y="25" width="1" height="13" fill="rgb(60,60,60)"/><rect x="10" y="25" width="1" height="13" fill="rgb(70,70,70)"/><rect x="11" y="25" width="1" height="13" fill="rgb(60,60,60)"/><rect x="12" y="25" width="1" height="13" fill="rgb(80,80,80)"/><rect x="13" y="25" width="1" height="13" fill="rgb(120,120,120)"/><rect x="14" y="25" width="1" height="13" fill="rgb(200,200,200)"/><rect x="15" y="25" width="1" height="13" fill="rgb(190,190,190)"/><rect x="16" y="25" width="1" height="13" fill="rgb(100,100,100)"/><rect x="17" y="25" width="1" height="13" fill="rgb(50,50,50)"/><rect x="18" y="25" width="1" height="13" fill="rgb(30,30,30)"/><rect x="19" y="25" width="1" height="13" fill="rgb(60,60,60)"/><rect x="20" y="25" width="1" height="13" fill="rgb(110,110,110)"/><rect x="21" y="25" width="1" height="13" fill="rgb(110,110,110)"/><rect x="22" y="25" width="1" height="13" fill="rgb(190,190,190)"/><rect x="23" y="25" width="1" height="13" fill="rgb(150,150,150)"/><rect x="24" y="25" width="1" height="13" fill="rgb(90,90,90)"/><rect x="25" y="25" width="1" height="13" fill="rgb(80,80,80)"/><rect x="26" y="25" width="1" height="13" fill="rgb(120,120,120)"/><rect x="27" y="25" width="1" height="13" fill="rgb(200,200,200)"/><rect x="28" y="25" width="1" height="13" fill="rgb(100,100,100)"/><rect x="29" y="25" width="1" height="13" fill="rgb(60,60,60)"/><rect x="30" y="25" width="1" height="13" fill="rgb(170,170,170)"/><rect x="32" y="25" width="1" height="13" fill="rgb(60,60,60)"/><rect x="33" y="25" width="1" height="13" fill="rgb(40,40,40)"/><rect x="34" y="25" width="1" height="13" fill="rgb(120,120,120)"/><rect x="35" y="25" width="1" height="13" fill="rgb(60,60,60)"/><rect x="36" y="25" width="1" height="13" fill="rgb(120,120,120)"/><rect x="37" y="25" width="1" height="13" fill="rgb(150,150,150)"/><rect x="39" y="25" width="1" height="13" fill="rgb(60,60,60)"/><rect x="40" y="25" width="1" height="13" fill="rgb(90,90,90)"/><rect x="41" y="25" width="1" height="13" fill="rgb(170,170,170)"/><rect x="42" y="25" width="1" height="13" fill="rgb(90,90,90)"/><rect x="43" y="25" width="1" height="13" fill="rgb(150,150,150)"/><rect x="44" y="25" width="1" height="13" fill="rgb(160,160,160)"/><rect x="45" y="25" width="1" height="13" fill="rgb(50,50,50)"/><rect x="46" y="25" width="1" height="13" fill="rgb(70,70,70)"/><rect x="47" y="25" width="1" height="13" fill="rgb(170,170,170)"/><rect x="48" y="25" width="1" height="13" fill="rgb(100,100,100)"/><rect x="49" y="25" width="1" height="13" fill="rgb(120,120,120)"/><rect x="50" y="25" width="1" height="13" fill="rgb(180,180,180)"/><rect x="51" y="25" width="1" height="13" fill="rgb(200,200,200)"/><rect x="52" y="25" width="1" height="13" fill="rgb(100,100,100)"/><rect x="53" y="25" width="1" height="13" fill="rgb(60,60,60)"/><rect x="54" y="25" width="1" height="13" fill="rgb(110,110,110)"/><rect x="55" y="25" width="1" height="13" fill="rgb(130,130,130)"/><rect x="56" y="25" width="1" height="13" fill="rgb(90,90,90)"/><rect x="57" y="25" width="1" height="13" fill="rgb(200,200,200)"/><rect x="58" y="25" width="1" height="13" fill="rgb(220,220,220)"/><rect x="59" y="25" width="1" height="13" fill="rgb(70,70,70)"/><rect x="60" y="25" width="1" height="13" fill="rgb(170,170,170)"/><rect x="61" y="25" width="1" height="13" fill="rgb(110,110,110)"/><rect x="62" y="25" width="1" height="13" fill="rgb(60,60,60)"/><rect x="63" y="25" width="1" height="13" fill="rgb(130,130,130)"/><rect x="64" y="25" width="1" height="13" fill="rgb(200,200,200)"/><rect x="65" y="25" width="1" height="13" fill="rgb(40,40,40)"/><rect x="66" y="25" width="1" height="13" fill="rgb(220,220,220)"/><rect x="67" y="25" width="1" height="13" fill="rgb(120,120,120)"/><rect x="68" y="25" width="1" height="13" fill="rgb(130,130,130)"/><rect x="69" y="25" width="1" height="13" fill="rgb(150,150,150)"/><rect x="70" y="25" width="1" height="13" fill="rgb(240,240,240)"/><rect x="71" y="25" width="1" height="13" fill="rgb(60,60,60)"/><rect x="72" y="25" width="1" height="13" fill="rgb(170,170,170)"/><rect x="73" y="25" width="1" height="13" fill="rgb(80,80,80)"/><rect x="74" y="25" width="1" height="13" fill="rgb(60,60,60)"/><rect x="75" y="25" width="1" height="13" fill="rgb(120,120,120)"/><rect x="76" y="25" width="1" height="13" fill="rgb(70,70,70)"/><rect x="77" y="25" width="1" height="13" fill="rgb(50,50,50)"/><rect x="78" y="25" width="1" height="13" fill="rgb(210,210,210)"/><rect x="79" y="25" width="1" height="13" fill="rgb(200,200,200)"/><rect x="80" y="25" width="1" height="13" fill="rgb(70,70,70)"/><rect x="81" y="25" width="1" height="13" fill="rgb(80,80,80)"/><rect x="82" y="25" width="1" height="13" fill="rgb(120,120,120)"/><rect x="83" y="25" width="1" height="13" fill="rgb(140,140,140)"/><rect x="84" y="25" width="1" height="13" fill="rgb(110,110,110)"/><rect x="85" y="25" width="1" height="13" fill="rgb(60,60,60)"/><rect x="86" y="25" width="1" height="13" fill="rgb(210,210,210)"/><rect x="87" y="25" width="1" height="13" fill="rgb(200,200,200)"/><rect x="88" y="25" width="1" height="13" fill="rgb(80,80,80)"/><rect x="89" y="25" width="1" height="13" fill="rgb(60,60,60)"/><rect x="90" y="25" width="1" height="13" fill="rgb(120,120,120)"/><rect x="91" y="25" width="1" height="13" fill="rgb(40,40,40)"/><rect x="92" y="25" width="1" height="13" fill="rgb(200,200,200)"/><rect x="93" y="25" width="1" height="13" fill="rgb(230,230,230)"/><rect x="94" y="25" width="1" height="13" fill="rgb(70,70,70)"/><rect x="95" y="25" width="1" height="13" fill="rgb(60,60,60)"/><rect x="96" y="25" width="1" height="13" fill="rgb(150,150,150)"/><rect x="97" y="25" width="1" height="13" fill="rgb(210,210,210)"/><rect x="98" y="25" width="1" height="13" fill="rgb(90,90,90)"/><rect x="99" y="25" width="1" height="13" fill="rgb(130,130,130)"/><rect x="100" y="25" width="1" height="13" fill="rgb(220,220,220)"/><rect x="101" y="25" width="1" height="13" fill="rgb(160,160,160)"/><rect x="102" y="25" width="1" height="13" fill="rgb(60,60,60)"/><rect x="103" y="25" width="1" height="13" fill="rgb(40,40,40)"/><rect x="104" y="25" width="1" height="13" fill="rgb(160,160,160)"/><rect x="105" y="25" width="1" height="13" fill="rgb(190,190,190)"/><rect x="106" y="25" width="1" height="13" fill="rgb(60,60,60)"/><rect x="107" y="25" width="1" height="13" fill="rgb(50,50,50)"/><rect x="109" y="25" width="1" height="13" fill="rgb(60,60,60)"/><rect x="110" y="25" width="1" height="13" fill="rgb(100,100,100)"/><rect x="111" y="25" width="1" height="13" fill="rgb(200,200,200)"/><rect x="112" y="25" width="1" height="13" fill="rgb(210,210,210)"/><rect x="113" y="25" width="1" height="13" fill="rgb(100,100,100)"/><rect x="114" y="25" width="1" height="13" fill="rgb(60,60,60)"/><rect x="115" y="25" width="1" height="13" fill="rgb(90,90,90)"/><rect x="116" y="25" width="1" height="13" fill="rgb(70,70,70)"/><rect x="117" y="25" width="1" height="13" fill="rgb(180,180,180)"/></g></svg>
<!-- header text -->
<div class="a" style="left:4.6px;top:3px;font-size:9.6px;font-weight:bold;color:#000;transform:scaleY(1.13);transform-origin:0 0">Production Worksheet</div>
<div class="a t" style="left:4px;top:17px">Wilcom EmbroideryStudio – Level 3 Advanced</div>
<div class="a t" style="left:4.5px;top:42.8px">Design:</div>
<div class="a t" style="left:36.5px;top:42.8px">Ballgame 5.8in</div>
<div class="a t" style="left:4.5px;top:51.6px">Colorway:</div>
<div class="a t" style="left:36.5px;top:51.6px">Colorway 1</div>

<div class="a t" style="left:547.5px;top:4.5px">Stitches:</div><div class="a t" style="left:576px;top:4.5px">9433</div>
<div class="a t" style="left:547.5px;top:13.3px">Colors:</div><div class="a t" style="left:576px;top:13.3px">1</div>
<div class="a t" style="left:547.5px;top:22.1px">Height:</div><div class="a t" style="left:576px;top:22.1px">3.84 in</div>
<div class="a t" style="left:547.5px;top:30.9px">Width:</div><div class="a t" style="left:576px;top:30.9px">5.81 in</div>
<div class="a t" style="left:547.5px;top:39.7px">Zoom:</div><div class="a t" style="left:576px;top:39.7px">1:1</div>

<!-- right panel -->
<div id="rp" style="position:absolute;left:0;top:0">
<div class="a t" style="left:470.5px;top:61.00px">Machine:</div><div class="a t" style="left:518px;top:61.00px">Tajima</div>
<div class="a t" style="left:470.5px;top:69.97px">Color changes:</div><div class="a t" style="left:518px;top:69.97px">0</div>
<div class="a t" style="left:470.5px;top:78.94px">Stops:</div><div class="a t" style="left:518px;top:78.94px">1</div>
<div class="a t" style="left:470.5px;top:87.91px">Trims:</div><div class="a t" style="left:518px;top:87.91px">16</div>
<div class="a t" style="left:470.5px;top:96.88px">Left:</div><div class="a t" style="left:518px;top:96.88px">73.8 mm</div>
<div class="a t" style="left:470.5px;top:105.85px">Right:</div><div class="a t" style="left:518px;top:105.85px">73.8 mm</div>
<div class="a t" style="left:470.5px;top:114.82px">Up:</div><div class="a t" style="left:518px;top:114.82px">48.8 mm</div>
<div class="a t" style="left:470.5px;top:123.79px">Down:</div><div class="a t" style="left:518px;top:123.79px">48.8 mm</div>
<div class="a t" style="left:470.5px;top:132.76px">EndX:</div><div class="a t" style="left:518px;top:132.76px">0.00 in</div>
<div class="a t" style="left:470.5px;top:141.73px">EndY:</div><div class="a t" style="left:518px;top:141.73px">0.00 in</div>
<div class="a t" style="left:470.5px;top:150.70px">Max Stitch:</div><div class="a t" style="left:518px;top:150.70px">7.0 mm</div>
<div class="a t" style="left:470.5px;top:159.67px">Min Stitch:</div><div class="a t" style="left:518px;top:159.67px">0.3 mm</div>
<div class="a t" style="left:470.5px;top:168.64px">Max Jump:</div><div class="a t" style="left:518px;top:168.64px">7.3 mm</div>
<div class="a t" style="left:470.5px;top:177.61px">Total Bobbin:</div><div class="a t" style="left:518px;top:177.61px">69.59ft</div>
</div>
<div class="ln" style="left:469px;top:185px;width:129px;height:1px;background:#a6a6a6"></div>
<div class="a t" style="left:470.5px;top:186.5px">Stop Sequence:</div>
<div class="a t" style="left:471px;top:196px;font-weight:bold;text-decoration:underline">#</div>
<div class="a t" style="left:479px;top:196px;font-weight:bold;text-decoration:underline">N#</div>
<div class="a t" style="left:503px;top:196px;font-weight:bold;text-decoration:underline">St.</div>
<div class="a t" style="left:515px;top:196px;font-weight:bold;text-decoration:underline">Description</div>
<div class="a t" style="left:554.4px;top:196px;font-weight:bold;text-decoration:underline">Code</div>
<div class="a t" style="left:574px;top:196px;font-weight:bold;text-decoration:underline">Brand</div>
<div class="a t" style="left:471px;top:204.5px">1.</div>
<div class="a t" style="left:479px;top:204.5px">2</div>
<div style="position:absolute;left:490px;top:204px;width:5px;height:5px;background:#1e8fd8"></div>
<div class="a t" style="left:497px;top:204.5px">9431</div>
<div class="a t" style="left:515px;top:204.5px">Cyan</div>
<div class="a t" style="left:567.3px;top:204.5px">2</div>
<div class="a t" style="left:574px;top:204.5px">Wilcom</div>
<div class="ln" style="left:469px;top:212px;width:129px;height:1px;background:#a6a6a6"></div>

<!-- footer -->
<div class="a t" style="left:4px;top:414.8px">Created By:</div>
<div class="a t" style="left:149px;top:414.8px">Last Saved: 12/04/2025 03.38.51</div>
<div class="a t" style="left:356px;top:414.8px">Printed: 12/04/2025 03.38.54</div>
<div class="a t" style="left:562.5px;top:414.8px">Page 1 of 1</div>

</body></html>
